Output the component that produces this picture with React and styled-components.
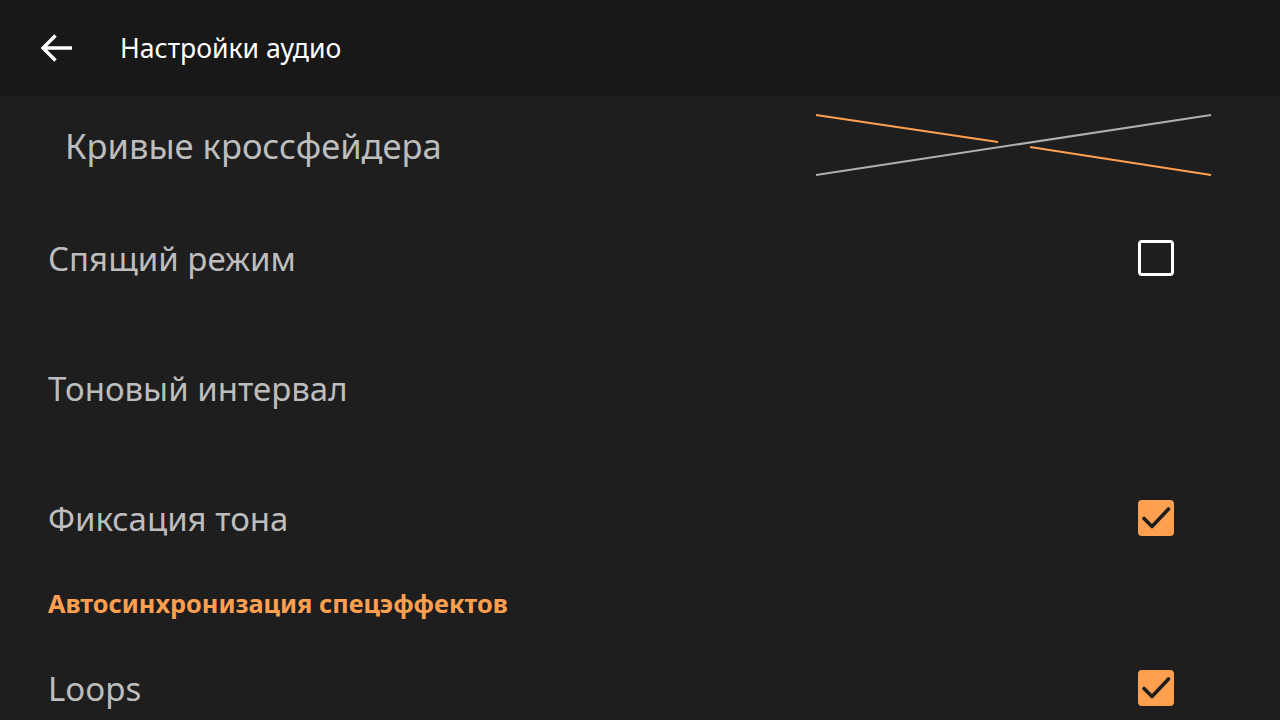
import styled, { createGlobalStyle } from "styled-components";

const GlobalStyle = createGlobalStyle`
  html, body {
    margin: 0;
    padding: 0;
    background: #1e1e1e;
    font-family: "Noto Sans", "Open Sans", sans-serif;
  }
`;

const Page = styled.div`
  width: 1280px;
  height: 720px;
  overflow: hidden;
  background: #1e1e1e;
  display: flex;
  flex-direction: column;
`;

const Toolbar = styled.div`
  height: 96px;
  flex-shrink: 0;
  background: #181818;
  display: flex;
  align-items: center;
  padding-left: 38px;
`;

const BackButton = styled.div`
  width: 36px;
  height: 36px;
  display: flex;
  align-items: center;
  justify-content: center;
  margin-right: 46px;
`;

const Title = styled.div`
  color: #ffffff;
  font-size: 26.6px;
`;

const Row = styled.div`
  height: ${(p) => p.h || 130}px;
  flex-shrink: 0;
  box-sizing: border-box;
  display: flex;
  align-items: center;
  justify-content: space-between;
  padding-left: ${(p) => p.indent || 48}px;
  padding-right: 106px;
  padding-top: ${(p) => p.top || 0}px;
`;

const Label = styled.div`
  color: #bdbdbd;
  font-size: ${(p) => p.size || 33}px;
`;

const SectionHeader = styled.div`
  height: 40px;
  flex-shrink: 0;
  display: flex;
  align-items: center;
  padding-left: 48px;
  color: #ff9f50;
  font-size: 25.3px;
  font-weight: 700;
`;

const Box = styled.div`
  width: 36px;
  height: 36px;
  box-sizing: border-box;
  border-radius: 4px;
  border: ${(p) => (p.checked ? "none" : "3px solid #ffffff")};
  background: ${(p) => (p.checked ? "#ff9f50" : "transparent")};
  display: flex;
  align-items: center;
  justify-content: center;
`;

const Curves = styled.svg`
  margin-right: -40px;
  margin-bottom: 2px;
`;

const Checkbox = ({ checked }) => (
  <Box checked={checked}>
    {checked && (
      <svg width="36" height="36" viewBox="0 0 36 36">
        <path
          d="M6 18.5l8 8L30.5 9"
          fill="none"
          stroke="#1e1e1e"
          strokeWidth="3.6"
          strokeLinecap="round"
          strokeLinejoin="round"
        />
      </svg>
    )}
  </Box>
);

export default function App() {
  return (
    <>
      <GlobalStyle />
      <Page>
        <Toolbar>
          <BackButton>
            <svg width="36" height="36" viewBox="0 0 36 36">
              <path
                d="M34 18H5M17.5 5.5L5 18l12.5 12.5"
                fill="none"
                stroke="#ffffff"
                strokeWidth="3.4"
              />
            </svg>
          </BackButton>
          <Title>Настройки аудио</Title>
        </Toolbar>

        <Row h={97} indent={65} top={2}>
          <Label size={34.5}>Кривые кроссфейдера</Label>
          <Curves width="400" height="64" viewBox="0 0 400 64">
            <line x1="2" y1="2" x2="184" y2="29" stroke="#ff9f50" strokeWidth="2" />
            <line x1="216" y1="34" x2="397" y2="62" stroke="#ff9f50" strokeWidth="2" />
            <line x1="2" y1="62" x2="397" y2="2" stroke="#b0b0b0" strokeWidth="2" />
          </Curves>
        </Row>

        <Row>
          <Label>Спящий режим</Label>
          <Checkbox checked={false} />
        </Row>

        <Row>
          <Label>Тоновый интервал</Label>
        </Row>

        <Row>
          <Label>Фиксация тона</Label>
          <Checkbox checked />
        </Row>

        <SectionHeader>Автосинхронизация спецэффектов</SectionHeader>

        <Row>
          <Label>Loops</Label>
          <Checkbox checked />
        </Row>
      </Page>
    </>
  );
}
